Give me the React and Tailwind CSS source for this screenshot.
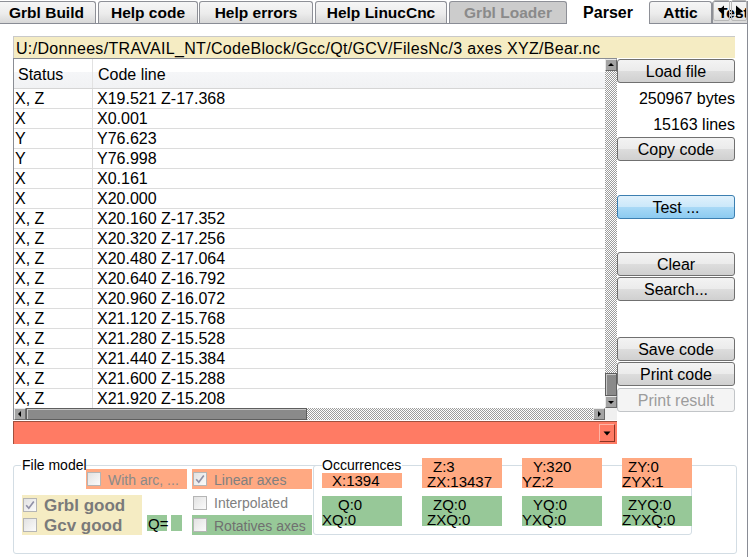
import React from 'react';

const rows = [
  ['X, Z', 'X19.521 Z-17.368'],
  ['X', 'X0.001'],
  ['Y', 'Y76.623'],
  ['Y', 'Y76.998'],
  ['X', 'X0.161'],
  ['X', 'X20.000'],
  ['X, Z', 'X20.160 Z-17.352'],
  ['X, Z', 'X20.320 Z-17.256'],
  ['X, Z', 'X20.480 Z-17.064'],
  ['X, Z', 'X20.640 Z-16.792'],
  ['X, Z', 'X20.960 Z-16.072'],
  ['X, Z', 'X21.120 Z-15.768'],
  ['X, Z', 'X21.280 Z-15.528'],
  ['X, Z', 'X21.440 Z-15.384'],
  ['X, Z', 'X21.600 Z-15.288'],
  ['X, Z', 'X21.920 Z-15.208'],
];

const tabBase =
  'h-[22px] shrink-0 border border-b-0 border-[#8e9097] rounded-t-[3px] text-[15.5px] font-bold leading-[21px] text-center whitespace-nowrap bg-[image:linear-gradient(#f6f6f6,#ececec_55%,#d8d8d8)]';

const btnBase =
  'h-[24px] w-[118px] shrink-0 rounded-[3px] border border-[#707070] text-[16px] leading-[23px] text-center text-black bg-[image:linear-gradient(#f3f3f3,#ebebeb_50%,#dddddd_50%,#d0d0d0)]';

function Check({ checked }) {
  return (
    <div className="w-[14px] h-[14px] shrink-0 border border-[#b5b5b5] bg-[image:linear-gradient(135deg,#e2e2e2,#fbfbfb)] flex items-center justify-center">
      {checked && (
        <svg width="12" height="12" viewBox="0 0 12 12">
          <path d="M2.2 6.2 L4.8 9.2 L9.8 2.6" fill="none" stroke="#9090a6" strokeWidth="1.7" />
        </svg>
      )}
    </div>
  );
}

function Arrow({ dir }) {
  const d = {
    up: 'M1 5 L4 2 L7 5 Z',
    down: 'M1 3 L7 3 L4 6 Z',
    left: 'M5 1 L5 7 L2 4 Z',
    right: 'M3 1 L3 7 L6 4 Z',
  }[dir];
  return (
    <div className="w-[12px] h-[12px] shrink-0 bg-[#a4a4a4] border border-[#e8e8e8] border-r-[#6a6a6a] border-b-[#6a6a6a] flex items-center justify-center">
      <svg width="8" height="8" viewBox="0 0 8 8">
        <path d={d} fill="#000" />
      </svg>
    </div>
  );
}

export default function App() {
  return (
    <div className="w-[749px] h-[557px] bg-white overflow-hidden font-['Liberation_Sans',Arial,sans-serif] text-black">
      {/* Tab bar */}
      <div className="relative flex items-end h-[23px] w-[748px]">
        <div className={`${tabBase} -ml-[3px] w-[99px]`}>Grbl Build</div>
        <div className={`${tabBase} ml-[2px] w-[100px]`}>Help code</div>
        <div className={`${tabBase} ml-[1px] w-[114px]`}>Help errors</div>
        <div className={`${tabBase} ml-[2px] w-[132px]`}>Help LinucCnc</div>
        <div className="ml-[2px] w-[118px] h-[22px] shrink-0 border border-b-0 border-[#8e9097] rounded-t-[3px] bg-[#cccccc] text-[#8a8a8a] text-[15.5px] font-bold leading-[21px] text-center">
          Grbl Loader
        </div>
        <div className="relative z-10 -mb-px w-[82px] h-[24px] shrink-0 bg-white text-[16px] font-bold leading-[25px] text-center">
          Parser
        </div>
        <div className={`${tabBase} w-[63px]`}>Attic</div>
        <div className="w-[36px] h-[22px] shrink-0 overflow-hidden border border-b-0 border-[#8e9097] rounded-tl-[3px] bg-[image:linear-gradient(#f6f6f6,#ececec_55%,#d8d8d8)] text-[15.5px] font-bold leading-[21px] pl-[5px] whitespace-nowrap">
          Test
        </div>
        <div className="absolute left-[713px] top-0 w-[17px] h-[21px] border border-[#b8b8b8] rounded-[2px] flex items-center justify-center">
          <svg width="7" height="11" viewBox="0 0 7 11">
            <path d="M6 0.5 L6 10.5 L0.5 5.5 Z" fill="#000" />
          </svg>
        </div>
        <div className="absolute left-[731px] top-0 w-[16px] h-[21px] border border-[#b8b8b8] rounded-[2px] flex items-center justify-center">
          <svg width="8" height="12" viewBox="0 0 8 12">
            <path d="M1 0.5 L1 11.5 L7.5 6 Z" fill="#000" />
          </svg>
        </div>
      </div>

      {/* Pane */}
      <div className="w-[748px] h-[534px] border-t border-r border-[#898c95] flex flex-col">
        {/* Path */}
        <div className="mt-[12px] ml-[13px] w-[722px] h-[22px] shrink-0 bg-[#f5ecc3] border-t border-l border-[#c9c9c9] text-[16px] leading-[21px] tracking-[0.32px] pl-[2px] pt-[1px] whitespace-nowrap overflow-hidden">
          U:/Donnees/TRAVAIL_NT/CodeBlock/Gcc/Qt/GCV/FilesNc/3 axes XYZ/Bear.nc
        </div>

        {/* Table + buttons */}
        <div className="flex ml-[13px] shrink-0">
          <div className="w-[604px] h-[362px] border-l border-t border-[#8a8d94] flex flex-col">
            <div className="flex h-[349px]">
              <div className="flex-1 overflow-hidden">
                <div className="flex h-[30px] border-b border-[#d5d5d5] bg-[image:linear-gradient(#ffffff,#ffffff_45%,#f5f6f8_45%,#f1f2f4)] text-[16px] leading-[31px]">
                  <div className="w-[79px] border-r border-[#e2e2e2] pl-[4px]">Status</div>
                  <div className="flex-1 pl-[5px]">Code line</div>
                </div>
                {rows.map(([s, c], i) => (
                  <div key={i} className="flex h-[20px] border-b border-[#dcdcdc] text-[16px] leading-[20px]">
                    <div className="w-[79px] border-r border-[#dcdcdc] pl-[1px]">{s}</div>
                    <div className="flex-1 pl-[4px]">{c}</div>
                  </div>
                ))}
              </div>
              <div className="w-[12px] flex flex-col">
                <Arrow dir="up" />
                <div className="flex-1 bg-[image:repeating-conic-gradient(#9c9c9c_0%_25%,#ffffff_0%_50%)] bg-[length:2px_2px]" />
                <div className="h-[23px] bg-[#8a8a8a] border border-[#5e5e5e] shadow-[inset_1px_1px_0_#c8c8c8]" />
                <Arrow dir="down" />
              </div>
            </div>
            <div className="flex h-[12px]">
              <Arrow dir="left" />
              <div className="w-[281px] bg-[#8a8a8a] border border-[#5e5e5e] shadow-[inset_1px_1px_0_#c8c8c8]" />
              <div className="flex-1 bg-[image:repeating-conic-gradient(#9c9c9c_0%_25%,#ffffff_0%_50%)] bg-[length:2px_2px]" />
              <Arrow dir="right" />
              <div className="w-[12px] bg-[#f0f0f0]" />
            </div>
          </div>

          <div className="w-[118px] flex flex-col">
            <div className={`${btnBase} mt-[1px]`}>Load file</div>
            <div className="mt-[5px] h-[20px] text-[16px] leading-[21px] text-right">250967 bytes</div>
            <div className="mt-[6px] h-[20px] text-[16px] leading-[21px] text-right">15163 lines</div>
            <div className={`${btnBase} mt-[3px]`}>Copy code</div>
            <div className="mt-[34px] h-[24px] w-[118px] rounded-[3px] border border-[#3c7fb1] text-[16px] leading-[23px] text-center bg-[image:linear-gradient(#e0f1fc,#cbe8fa_50%,#a9d9f6_50%,#8ccbf1)]">
              Test ...
            </div>
            <div className={`${btnBase} mt-[33px]`}>Clear</div>
            <div className={`${btnBase} mt-[1px]`}>Search...</div>
            <div className={`${btnBase} mt-[36px]`}>Save code</div>
            <div className={`${btnBase} mt-[1px]`}>Print code</div>
            <div className="mt-[2px] h-[24px] w-[118px] rounded-[3px] border border-[#c2c5c8] bg-[#f4f4f4] text-[16px] leading-[23px] text-center text-[#9c9c9c]">
              Print result
            </div>
          </div>
        </div>

        {/* Combo */}
        <div className="mt-[1px] ml-[13px] w-[604px] h-[23px] shrink-0 bg-[#ff7b64] border-t border-l border-[#a0503e] flex justify-end items-center pr-[2px]">
          <div className="w-[16px] h-[18px] border border-[#ffb4a4] border-r-[#8a3424] border-b-[#8a3424] flex items-center justify-center">
            <svg width="8" height="5" viewBox="0 0 8 5">
              <path d="M0.5 0.5 L7.5 0.5 L4 4.5 Z" fill="#000" />
            </svg>
          </div>
        </div>

        {/* Bottom section */}
        <div className="relative h-[113px] shrink-0">
          <div className="absolute left-[13px] top-[21px] w-[724px] h-[89px] border border-[#d3dde4] rounded-[3px]" />
          <div className="relative flex items-start">
            {/* Column 1 */}
            <div className="w-[187px] flex flex-col">
              <div className="flex items-start">
                <div className="ml-[21px] mt-[13px] w-[65px] px-[1px] bg-white text-[14px] leading-[16px] whitespace-nowrap">
                  File model
                </div>
                <div className="mt-[25px] w-[101px] h-[20px] bg-[#ffa982] flex items-center pl-[1px] gap-[7px]">
                  <Check />
                  <span className="text-[14px] leading-[20px] pt-[1px] text-[#8a8a8a] whitespace-nowrap">With arc, ...</span>
                </div>
              </div>
              <div className="mt-[6px] flex items-start">
                <div className="ml-[22px] w-[120px] h-[40px] bg-[#f5ecc3] flex flex-col">
                  <div className="h-[20px] flex items-center pl-[1px] gap-[7px]">
                    <Check checked />
                    <span className="text-[17px] font-bold text-[#7a7a7a] leading-[20px] pt-[1px]">Grbl good</span>
                  </div>
                  <div className="h-[20px] flex items-center pl-[1px] gap-[7px]">
                    <Check />
                    <span className="text-[17px] font-bold text-[#7a7a7a] leading-[20px] pt-[1px]">Gcv good</span>
                  </div>
                </div>
                <div className="ml-[5px] mt-[20px] w-[20px] h-[16px] bg-[#97c898] text-[15px] leading-[17px] pl-[1px]">Q=</div>
                <div className="ml-[4px] mt-[20px] w-[11px] h-[16px] bg-[#97c898]" />
              </div>
            </div>

            {/* Column 2 */}
            <div className="ml-[5px] mt-[25px] w-[120px] flex flex-col">
              <div className="h-[20px] bg-[#ffa982] flex items-center pl-[1px] gap-[7px]">
                <Check checked />
                <span className="text-[14px] leading-[20px] pt-[1px] text-[#808080] whitespace-nowrap">Linear axes</span>
              </div>
              <div className="mt-[4px] h-[20px] flex items-center pl-[1px] gap-[7px]">
                <Check />
                <span className="text-[14px] leading-[20px] text-[#808080] whitespace-nowrap">Interpolated</span>
              </div>
              <div className="mt-[2px] h-[20px] bg-[#97c898] flex items-center pl-[1px] gap-[7px]">
                <Check />
                <span className="text-[14px] leading-[20px] pt-[1px] text-[#707070] whitespace-nowrap">Rotatives axes</span>
              </div>
            </div>

            {/* Column 3: Occurrences */}
            <div className="relative ml-[1px] mt-[14px] w-[379px] h-[71px]">
              <div className="absolute left-0 top-[7px] w-[379px] h-[70px] border border-[#d3dde4] rounded-[3px]" />
              <div className="relative pl-[9px] flex flex-col text-[15px] leading-[15px]">
                <div className="flex gap-[20px]">
                  <div className="w-[80px] flex flex-col">
                    <div className="h-[15px] bg-white text-[14px] leading-[15px] whitespace-nowrap">Occurrences</div>
                    <div className="h-[15px] bg-[#ffa982] pl-[10px]">X:1394</div>
                  </div>
                  <div className="w-[80px] h-[30px] bg-[#ffa982] pt-[1px]">
                    <div className="pl-[11px]">Z:3</div>
                    <div className="pl-[5px]">ZX:13437</div>
                  </div>
                  <div className="w-[80px] h-[30px] bg-[#ffa982] pt-[1px]">
                    <div className="pl-[11px]">Y:320</div>
                    <div>YZ:2</div>
                  </div>
                  <div className="w-[70px] h-[30px] bg-[#ffa982] pt-[1px]">
                    <div className="pl-[6px]">ZY:0</div>
                    <div>ZYX:1</div>
                  </div>
                </div>
                <div className="mt-[8px] flex gap-[20px]">
                  <div className="w-[80px] h-[30px] bg-[#97c898] pt-[1px]">
                    <div className="pl-[16px]">Q:0</div>
                    <div>XQ:0</div>
                  </div>
                  <div className="w-[80px] h-[30px] bg-[#97c898] pt-[1px]">
                    <div className="pl-[11px]">ZQ:0</div>
                    <div className="pl-[5px]">ZXQ:0</div>
                  </div>
                  <div className="w-[80px] h-[30px] bg-[#97c898] pt-[1px]">
                    <div className="pl-[11px]">YQ:0</div>
                    <div>YXQ:0</div>
                  </div>
                  <div className="w-[70px] h-[30px] bg-[#97c898] pt-[1px]">
                    <div className="pl-[6px]">ZYQ:0</div>
                    <div>ZYXQ:0</div>
                  </div>
                </div>
              </div>
            </div>
          </div>
        </div>
      </div>
    </div>
  );
}
